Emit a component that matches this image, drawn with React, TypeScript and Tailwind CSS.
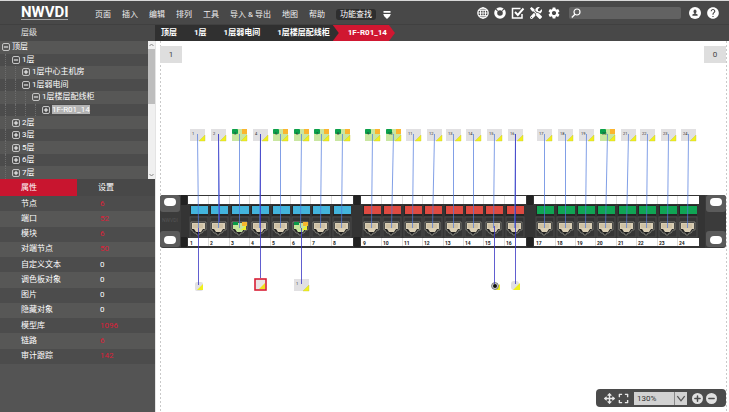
import { useState } from "react";
import { FaExpand, FaTools } from "react-icons/fa";
import { MdHelp, MdSettings } from "react-icons/md";
import { Minus, Move, Plus } from "lucide-react";

const MENU = ["页面", "插入", "编辑", "排列", "工具", "导入 & 导出", "地图", "帮助"];

const CRUMBS = ["顶层", "1层", "1层弱电间", "1层楼层配线柜"];

const TREE = [
  { label: "顶层", depth: 0, open: true },
  { label: "1层", depth: 1, open: true },
  { label: "1层中心主机房", depth: 2, open: false },
  { label: "1层弱电间", depth: 2, open: true },
  { label: "1层楼层配线柜", depth: 3, open: true },
  { label: "1F-R01_14", depth: 4, open: false, selected: true },
  { label: "2层", depth: 1, open: false },
  { label: "3层", depth: 1, open: false },
  { label: "5层", depth: 1, open: false },
  { label: "6层", depth: 1, open: false },
  { label: "7层", depth: 1, open: false },
];

const PROPS = [
  { name: "节点", value: "6", alert: true },
  { name: "端口", value: "52", alert: true },
  { name: "模块", value: "6", alert: true },
  { name: "对端节点", value: "50", alert: true },
  { name: "自定义文本", value: "0" },
  { name: "调色板对象", value: "0" },
  { name: "图片", value: "0" },
  { name: "隐藏对象", value: "0" },
  { name: "模型库", value: "1096", alert: true },
  { name: "链路", value: "6", alert: true },
  { name: "审计跟踪", value: "142", alert: true },
];

// port centre, left edge of the node above it
const PORTS: [number, number][] = [
  [199, 190], [219, 211], [240, 232], [260, 253], [281, 273], [301, 294], [321, 314], [342, 335],
  [372, 365], [392, 386], [413, 406], [433, 427], [454, 446], [474, 466], [494, 487], [515, 508],
  [545, 537], [566, 558], [586, 579], [606, 600], [627, 621], [647, 640], [668, 661], [688, 681],
];

const BANKS = [
  { x: 188, color: "#43b4dc" },
  { x: 361, color: "#de4a41" },
  { x: 534, color: "#10a554" },
];

const LINKED = [3, 5, 6, 7, 8, 9, 10, 20];
const BUSY = [3, 6];

function GlobeIcon() {
  return (
    <svg viewBox="0 0 12 12" className="size-3" fill="none" stroke="currentColor">
      <circle cx="6" cy="6" r="5.2" strokeWidth="1.2" />
      <ellipse cx="6" cy="6" rx="2.5" ry="5.2" strokeWidth="1" />
      <path d="M6 1v10M1 6h10M1.8 3.4h8.4M1.8 8.6h8.4" strokeWidth="0.9" />
    </svg>
  );
}

function RingIcon() {
  return (
    <svg viewBox="0 0 12 12" className="size-3">
      <circle cx="6" cy="6" r="4.3" fill="none" stroke="currentColor" strokeWidth="3" />
      <path d="M1.4 1.6l2.2 2.2M8.2 3.6l2-1.8" stroke="#484848" strokeWidth="1.1" />
    </svg>
  );
}

function CheckBoxIcon() {
  return (
    <svg viewBox="0 0 14 12" className="h-3 w-[14px]" fill="none" stroke="currentColor">
      <path d="M9.5 1.5H1.5v9.5h9.5V7" strokeWidth="1.5" />
      <path d="M4 5l2.8 3L12.5 1.5" strokeWidth="1.9" />
    </svg>
  );
}

function UserIcon() {
  return (
    <svg viewBox="0 0 12 12" className="size-3">
      <circle cx="6" cy="6" r="6" fill="currentColor" />
      <ellipse cx="6" cy="4.4" rx="1.5" ry="1.9" fill="#484848" />
      <path d="M5.4 5.5h1.2v1.1l2 .8v1.4H3.4V7.4l2-.8z" fill="#484848" />
    </svg>
  );
}

function Header() {
  return (
    <header className="flex h-[25px] shrink-0 items-center border-t border-b border-t-[#d8d8d8] border-b-[#404040] bg-[#484848] pr-[9px] text-white">
      <a href="#" className="ml-[21px] flex w-[47px] flex-col pt-px">
        <span className="text-[15px] leading-[13px] font-bold">NWVDI</span>
        <span className="h-px bg-[#a8a8a8]" />
      </a>
      <nav className="ml-[27px] flex items-center gap-[11px] pt-1">
        {MENU.map((item) => (
          <button key={item} className="text-[8px] leading-[12px] whitespace-nowrap text-[#f0f0f0]">
            {item}
          </button>
        ))}
        <button className="rounded-[3px] bg-[#2e2e2e] px-1 text-[8px] leading-[11px] whitespace-nowrap">
          功能查找
        </button>
        <button aria-label="更多" className="-ml-1">
          <svg viewBox="0 0 8 8" className="size-2" fill="currentColor">
            <path d="M.5 0h7v1.7h-7zM.2 3h7.6L6.8 5.2 4 8 1.2 5.2z" />
          </svg>
        </button>
      </nav>
      <div className="ml-auto flex items-center gap-[5px]">
        <button aria-label="网络"><GlobeIcon /></button>
        <button aria-label="刷新"><RingIcon /></button>
        <button aria-label="任务"><CheckBoxIcon /></button>
        <button aria-label="工具箱"><FaTools className="size-3" /></button>
        <button aria-label="选项"><MdSettings className="size-[14px]" /></button>
      </div>
      <label className="mx-2 flex h-3 w-[112px] items-center rounded-[2px] bg-[#626262] pl-[2px]">
        <svg viewBox="0 0 10 10" className="size-[10px] shrink-0" fill="none" stroke="currentColor">
          <circle cx="6" cy="4" r="3" strokeWidth="1.2" />
          <path d="M4 6.2L.8 9.4" strokeWidth="1.4" />
        </svg>
        <input aria-label="搜索" className="min-w-0 flex-1 bg-transparent px-1 text-[8px] outline-none" />
      </label>
      <div className="flex items-center gap-[5px]">
        <button aria-label="用户"><UserIcon /></button>
        <button aria-label="帮助"><MdHelp className="size-[14px]" /></button>
      </div>
    </header>
  );
}

function Sidebar() {
  const [tab, setTab] = useState("属性");

  return (
    <aside className="flex w-[155px] shrink-0 flex-col bg-[#545454] text-[8px] text-white">
      <h2 className="h-4 bg-[#484848] pl-[21px] leading-[15px] text-[#e0e0e0]">层级</h2>

      <div className="flex h-[138px]">
        <ul className="grid min-w-0 flex-1 auto-rows-fr">
          {TREE.map((row) => (
            <li key={row.label} className="flex items-center pl-[2px] odd:bg-[#575756] even:bg-[#4c4c4c]">
              {Array.from({ length: row.depth }, (_, i) => (
                <span key={i} className="ml-[3px] w-[7px] self-stretch border-l border-dotted border-[#6c6c6c]" />
              ))}
              <button
                aria-label={row.open ? "折叠" : "展开"}
                className="mr-[2px] flex size-2 shrink-0 items-center justify-center rounded-[2px] border border-[#c4c4c4]"
              >
                {row.open ? <Minus className="size-[6px]" strokeWidth={4} /> : <Plus className="size-[6px]" strokeWidth={4} />}
              </button>
              <span className={row.selected ? "bg-[#b4b4b4] leading-[9px] whitespace-nowrap" : "leading-[10px] whitespace-nowrap"}>
                {row.label}
              </span>
            </li>
          ))}
        </ul>
        {/* scrollbar */}
        <div className="flex w-[7px] flex-col items-center bg-[#f0f0f0]">
          <svg viewBox="0 0 7 8" className="h-2 w-[7px]" fill="none" stroke="#888">
            <path d="M1.5 5l2-2 2 2" />
          </svg>
          <div className="h-[55px] w-full bg-[#bdbdbd]" />
          <svg viewBox="0 0 7 8" className="mt-auto h-2 w-[7px]" fill="none" stroke="#888">
            <path d="M1.5 3l2 2 2-2" />
          </svg>
        </div>
      </div>

      <div className="flex h-[17px] bg-[#484848]">
        {["属性", "设置"].map((name) => (
          <button
            key={name}
            onClick={() => setTab(name)}
            className={tab === name ? "w-[77px] bg-[#c8152f] pl-[21px] text-left" : "w-[78px] pl-[21px] text-left"}
          >
            {name}
          </button>
        ))}
      </div>

      <table className="h-[168px] w-full table-fixed">
        <tbody>
          {PROPS.map((p) => (
            <tr key={p.name} className="odd:bg-[#4c4c4c] even:bg-[#575756]">
              <th className="w-[100px] p-0 pl-[21px] text-left leading-[12px] font-normal">{p.name}</th>
              <td className={p.alert ? "p-0 leading-[12px] text-[#dc1f38]" : "p-0 leading-[12px]"}>{p.value}</td>
            </tr>
          ))}
        </tbody>
      </table>
    </aside>
  );
}

function Breadcrumbs() {
  return (
    <nav className="flex h-4 shrink-0 bg-[#484848] text-[8px] leading-[16px] font-bold text-white">
      <div className="-mr-[6px] flex gap-[17px] bg-[#303030] pr-[9px] pl-[6px]">
        {CRUMBS.map((c) => (
          <a key={c} href="#" className="whitespace-nowrap">{c}</a>
        ))}
      </div>
      <a
        href="#"
        className="bg-[#d01731] pr-[8px] pl-[15px] whitespace-nowrap [clip-path:polygon(0_0,calc(100%-6px)_0,100%_50%,calc(100%-6px)_100%,0_100%,6px_50%)]"
      >
        1F-R01_14
      </a>
    </nav>
  );
}

function Ear({ x }: { x: number }) {
  return (
    <g>
      <rect x={x} y="195" width="20" height="17" rx="3" fill="#5b5b5b" />
      <rect x={x} y="231" width="20" height="16" rx="3" fill="#5b5b5b" />
      <rect x={x + 4} y="198" width="12" height="8" rx="4" fill="#fff" />
      <rect x={x + 4} y="236" width="12" height="8" rx="4" fill="#fff" />
    </g>
  );
}

function Jack({ cx, busy }: { cx: number; busy: boolean }) {
  return (
    <g>
      <rect x={cx - 9} y="217" width="18" height="20" fill="#353535" stroke="#4a4a4a" />
      <path
        d={`M${cx - 8} 222h15v8h-2l-2 3h-2l-1 2h-2l-1-2h-2l-2-3h-1z`}
        fill="#222"
        stroke="#8d8d85"
        strokeWidth="0.8"
      />
      <path d={`M${cx - 7} 223h13v6h-2l-2 3h-5l-2-3h-2z`} fill={busy ? "#c5e59a" : "#d9ceb5"} />
      {busy ? (
        <>
          <rect x={cx - 7} y="222" width="5" height="3" fill="#0a9a48" />
          <rect x={cx + 2} y="222" width="5" height="4" fill="#f6b52e" />
          <path d={`M${cx + 6} 225v5h-5z`} fill="#eef02a" />
        </>
      ) : (
        <path d={`M${cx - 5} 224v4M${cx - 3} 224v4M${cx - 1} 224v4M${cx + 1} 224v4M${cx + 3} 224v4`} stroke="#b9a57e" strokeWidth="0.6" />
      )}
    </g>
  );
}

function Node({ x, y, label, linked }: { x: number; y: number; label: string; linked?: boolean }) {
  return (
    <g>
      <rect x={x} y={y} width="15" height="12" fill={linked ? "#c9e6a0" : "#e1e0e2"} />
      {linked && (
        <>
          <rect x={x} y={y} width="6" height="5" rx="1" fill="#0ba04c" />
          <rect x={x + 10} y={y} width="5" height="5" fill="#fbb52f" />
        </>
      )}
      <path d={`M${x + 15} ${y + 6}v6h-6z`} fill="#f0f01c" stroke="#c4c43a" strokeWidth="0.4" />
      <text x={x + 2} y={y + 6} fontSize="4" fill="#333">{label}</text>
    </g>
  );
}

function PatchPanel() {
  return (
    <svg viewBox="156 41 573 371" className="h-auto w-full" role="img" aria-label="1F-R01_14">
      {/* page bounds */}
      <path d="M160.5 41v371M726.5 41v371" stroke="#c9c9c9" strokeDasharray="2 2" />

      <rect x="160" y="195" width="566" height="53" rx="3" fill="#3b3b3b" />
      <rect x="181" y="195" width="524" height="53" fill="#343434" />
      <Ear x={160} />
      <Ear x={706} />
      <text x="162" y="222" fontSize="5" fill="#555">NWVDI</text>

      {BANKS.map((bank, b) => (
        <g key={bank.x}>
          <rect x={bank.x} y="196" width="165" height="8" fill="#fff" />
          <rect x={bank.x} y="238" width="165" height="8" fill="#fff" />
          <rect x={bank.x - 7} y="195" width="6" height="10" fill="#222" />
          <rect x={bank.x - 7} y="237" width="6" height="10" fill="#222" />
          {PORTS.slice(b * 8, b * 8 + 8).map(([cx], i) => (
            <g key={cx}>
              {i > 0 && <path d={`M${cx - 10.5} 196v8M${cx - 10.5} 238v8`} stroke="#ddd" />}
              <rect x={cx - 9} y="205" width="18" height="11" fill="#262626" />
              <rect x={cx - 8} y="206" width="17" height="8" fill={bank.color} />
              <Jack cx={cx} busy={BUSY.includes(b * 8 + i + 1)} />
              <text x={cx - 9} y="245" fontSize="5" fontWeight="700" fill="#222">{b * 8 + i + 1}</text>
            </g>
          ))}
        </g>
      ))}

      {PORTS.map(([cx, x], i) => (
        <Node key={cx} x={x} y={129} label={String(i + 1)} linked={LINKED.includes(i + 1)} />
      ))}

      {/* far end nodes */}
      <rect x="195" y="282" width="8" height="9" rx="2" fill="#e1e0e2" />
      <path d="M203 284v6h-6z" fill="#f0f01c" />
      <rect x="255" y="279" width="11" height="11" fill="#e9e4e6" stroke="#d81f35" strokeWidth="1.6" />
      <path d="M265 283v6h-6z" fill="#f0e01c" />
      <Node x={294} y={279} label="1" />
      <path d="M500 284v6h-6z" fill="#f0f01c" />
      <circle cx="495" cy="286" r="3.4" fill="#ddd" stroke="#777" />
      <circle cx="495" cy="286" r="2" fill="#111" />
      <rect x="511" y="281" width="8" height="9" rx="3" fill="#e1e0e2" />
      <path d="M520 283v7h-7z" fill="#f0f01c" />

      {PORTS.map(([cx, x]) => (
        <path key={cx} d={`M${x + 7.5} 134L${cx - 0.5} 228`} stroke="#4b76dc" strokeOpacity="0.7" />
      ))}
      <path d="M218.5 134L219.5 222" stroke="#4038c8" strokeOpacity="0.8" />
      <path d="M198.5 228v57M260.5 134v144M301.5 228v56M494.5 226v58M515.5 134v150" fill="none" stroke="#3a36c4" strokeOpacity="0.8" />
    </svg>
  );
}

function ZoomBar() {
  return (
    <div className="absolute right-[3px] bottom-[5px] flex h-[18px] items-center rounded-[4px] bg-[#4b4b4b] pr-[9px] pl-2 text-[#e8e8e8]">
      <button aria-label="移动"><Move className="size-[11px]" strokeWidth={3} /></button>
      <button aria-label="适合窗口" className="ml-[3px]"><FaExpand className="size-[11px]" /></button>
      <div className="relative ml-[5px]">
        <select
          aria-label="缩放"
          defaultValue="130%"
          className="block h-[13px] w-[53px] appearance-none bg-[#d2d2d2] pl-[3px] text-[8px] leading-[13px] text-[#333]"
        >
          <option>100%</option>
          <option>130%</option>
          <option>200%</option>
        </select>
        <svg
          viewBox="0 0 13 13"
          className="pointer-events-none absolute top-0 right-0 size-[13px] border-l border-[#8a8a8a]"
          fill="none"
          stroke="#555"
          strokeWidth="1.4"
        >
          <path d="M2.5 4l4 5 4-5" />
        </svg>
      </div>
      <button aria-label="放大" className="ml-[5px] rounded-full bg-[#e0e0e0] p-px text-[#4b4b4b]">
        <Plus className="size-[9px]" strokeWidth={4} />
      </button>
      <button aria-label="缩小" className="ml-[3px] rounded-full bg-[#e0e0e0] p-px text-[#4b4b4b]">
        <Minus className="size-[9px]" strokeWidth={4} />
      </button>
    </div>
  );
}

export default function App() {
  return (
    <div className="flex h-screen flex-col overflow-hidden bg-white font-[Roboto,'Noto_Sans_CJK_SC',sans-serif]">
      <Header />
      <div className="flex min-h-0 flex-1">
        <Sidebar />
        <main className="flex min-w-0 flex-1 flex-col">
          <Breadcrumbs />
          <div className="relative min-h-0 flex-1 border-l border-[#e4e4e4]">
            <PatchPanel />
            <div className="absolute top-[5px] right-[3px] left-1 flex justify-between text-[8px] leading-[17px] text-[#444]">
              <span className="w-[22px] bg-[#dedede] text-center">1</span>
              <span className="w-[22px] bg-[#dedede] text-center">0</span>
            </div>
            <ZoomBar />
          </div>
        </main>
      </div>
    </div>
  );
}
